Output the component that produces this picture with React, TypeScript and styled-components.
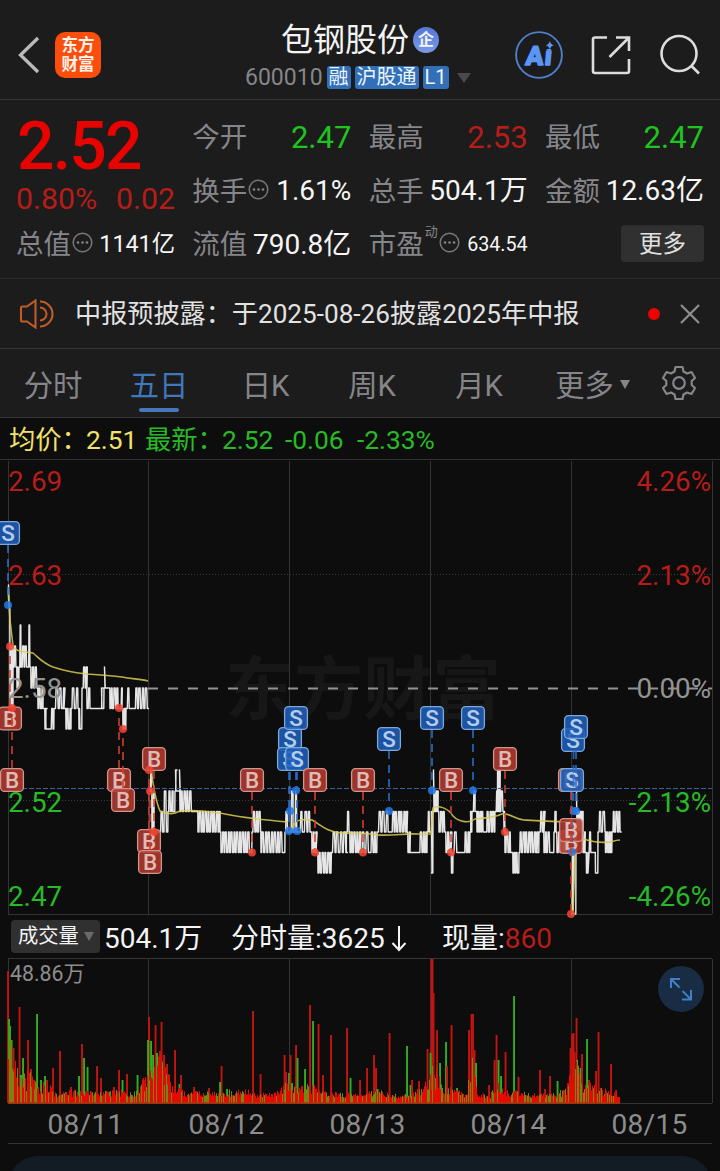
import React from "react";
import styled, { createGlobalStyle } from "styled-components";

const RED = "#e60300";
const DIM_RED = "#b71c18";
const GREEN = "#1fc41f";
const SOFT_GREEN = "#26bb26";
const MUTED = "#86868a";

const Global = createGlobalStyle`
  * { box-sizing: border-box; }
  body { margin: 0; background: #0d0d0d; }
`;

const Screen = styled.div`
  width: 720px;
  height: 1171px;
  overflow: hidden;
  display: flex;
  flex-direction: column;
  background: #0d0d0d;
  color: #f4f4f4;
  font-family: Roboto, "Noto Sans CJK SC", sans-serif;
  font-size: 28px;
  line-height: 1;
  white-space: nowrap;
`;

const Header = styled.header`
  flex: none;
  height: 100px;
  display: grid;
  grid-template-columns: 220px 1fr 220px;
  background: #1c1c1c;
  border-bottom: 1px solid #343434;
`;

const HeaderLeft = styled.div`
  display: flex;
  align-items: center;
  padding: 11px 0 0 17px;
  gap: 15px;
`;

const Logo = styled.div`
  width: 46px;
  height: 46px;
  border-radius: 10px;
  background: #fb4d0c;
  color: #fff3ea;
  display: flex;
  flex-direction: column;
  align-items: center;
  justify-content: center;
  font: 700 16.5px/19px "Noto Sans CJK SC", sans-serif;
  padding-bottom: 2px;
`;

const HeaderCenter = styled.div`
  display: flex;
  flex-direction: column;
  padding-top: 22px;
`;

const TitleRow = styled.div`
  display: flex;
  align-items: center;
  height: 35px;
  padding-left: 61px;
  font-size: 32px;
  gap: 4px;
`;

const CompanyBadge = styled.span`
  width: 26px;
  height: 26px;
  border-radius: 50%;
  background: linear-gradient(#5376d6, #7b9ae8);
  display: flex;
  align-items: center;
  justify-content: center;
  font-size: 16px;
  font-weight: 700;
`;

const CodeRow = styled.div`
  display: flex;
  align-items: center;
  height: 41px;
  padding-left: 25px;
  gap: 4px;
  color: ${MUTED};
  font-size: 23px;
`;

const Tag = styled.span`
  height: 23px;
  padding: 0 2px;
  border-radius: 3px;
  background: #3170b8;
  color: #eef4fb;
  font-size: 20px;
  line-height: 22px;
`;

const Caret = styled.span<{ $w: number; $h: number; $color: string; $ml?: number; $up?: number }>`
  width: 0;
  height: 0;
  margin-left: ${(p) => p.$ml ?? 0}px;
  margin-bottom: ${(p) => p.$up ?? 0}px;
  border-left: ${(p) => p.$w / 2}px solid transparent;
  border-right: ${(p) => p.$w / 2}px solid transparent;
  border-top: ${(p) => p.$h}px solid ${(p) => p.$color};
`;

const HeaderRight = styled.div`
  display: flex;
  align-items: center;
  padding: 10px 0 0 15px;
  gap: 28px;
`;

const Quote = styled.section`
  flex: none;
  height: 179px;
  padding: 11px 16px 0;
  display: grid;
  grid-template-columns: repeat(4, 159px);
  grid-template-rows: repeat(3, 53.5px);
  justify-content: space-between;
  background: #1c1c1c;
  border-bottom: 1px solid #2a2a2a;
`;

const PriceBlock = styled.div`
  grid-row: span 2;
  display: flex;
  flex-direction: column;
`;

const Price = styled.div`
  color: ${RED};
  font-size: 66px;
  font-weight: 500;
  line-height: 71px;
  letter-spacing: -1.8px;
  padding-left: 1px;
`;

const Change = styled.div`
  display: flex;
  justify-content: space-between;
  color: ${DIM_RED};
  font-size: 30.3px;
  line-height: 34px;
`;

const Cell = styled.div`
  display: flex;
  align-items: center;
  justify-content: space-between;
`;

const Label = styled.span`
  display: flex;
  align-items: center;
  gap: 1px;
  color: ${MUTED};
  font-size: 27.5px;
`;

const Sup = styled.sup`
  align-self: flex-start;
  font-size: 13px;
  line-height: 13px;
  margin: -6px 0 0 0;
`;

const Value = styled.span<{ $color?: string; $size?: number }>`
  color: ${(p) => p.$color ?? "#f6f6f6"};
  font-size: ${(p) => p.$size ?? 28}px;
`;

const MoreButton = styled.button`
  justify-self: end;
  align-self: center;
  width: 83px;
  height: 37px;
  margin-top: -2px;
  border: 0;
  border-radius: 4px;
  background: #303030;
  color: #e0e0e0;
  font: 23.5px/34px Roboto, "Noto Sans CJK SC", sans-serif;
  padding: 0;
`;

const Notice = styled.section`
  flex: none;
  height: 70px;
  display: flex;
  align-items: center;
  padding: 0 20px 0 19px;
  background: #1c1c1c;
  border-bottom: 1px solid #343434;
  color: #e2e2e2;
  font-size: 26.15px;
`;

const NoticeText = styled.span`
  flex: 1;
  margin-left: 20px;
  padding-top: 2px;
`;

const RedDot = styled.span`
  width: 12px;
  height: 12px;
  border-radius: 50%;
  background: #ee0200;
  margin-right: 20px;
`;

const Tabs = styled.nav`
  flex: none;
  height: 69px;
  display: grid;
  grid-template-columns: 106px 106px 107px 106px 108px 119px 1fr;
  background: #1c1c1c;
  border-bottom: 1px solid #343434;
`;

const Tab = styled.div<{ $active?: boolean }>`
  position: relative;
  display: flex;
  align-items: center;
  justify-content: center;
  gap: 6px;
  padding-top: 7px;
  color: ${(p) => (p.$active ? "#3f78bc" : MUTED)};
  font-size: 29.3px;
  &::after {
    content: "";
    display: ${(p) => (p.$active ? "block" : "none")};
    position: absolute;
    bottom: 5px;
    left: 33px;
    width: 40px;
    height: 4px;
    border-radius: 2px;
    background: #4478b8;
  }
`;

const SettingsTab = styled(Tab)`
  justify-content: flex-start;
  padding: 0 0 0 9px;
`;

const Averages = styled.div`
  flex: none;
  height: 41px;
  display: flex;
  align-items: center;
  padding: 3px 0 0 9px;
  font-size: 26.3px;
  color: ${SOFT_GREEN};
`;

const Avg = styled.span<{ $w: number; $color?: string }>`
  width: ${(p) => p.$w}px;
  color: ${(p) => p.$color ?? "inherit"};
`;

const Chart = styled.svg`
  flex: none;
  display: block;
  font-family: Roboto, "Noto Sans CJK SC", sans-serif;
`;

const VolumeHead = styled.div`
  flex: none;
  height: 39px;
  display: flex;
  align-items: center;
  padding-left: 11px;
  font-size: 28px;
`;

const Select = styled.div`
  width: 89px;
  height: 33px;
  margin: -4px 4px 0 0;
  border-radius: 4px;
  background: #303030;
  display: flex;
  align-items: center;
  padding: 0 0 0 7px;
  gap: 5px;
  font-size: 20.3px;
`;

const HeadItem = styled.span<{ $w: number }>`
  display: flex;
  width: ${(p) => p.$w}px;
`;

const Dates = styled.div`
  flex: none;
  height: 40px;
  margin: 0 8px;
  width: 704px;
  display: grid;
  grid-template-columns: repeat(5, 141px);
  align-items: center;
  text-align: center;
  border-bottom: 1px solid #343434;
  color: #8d8d8d;
  font-size: 28px;
  letter-spacing: 0.3px;
  padding: 3px 0 0 7px;
`;

const BottomPanel = styled.div`
  flex: none;
  height: 60px;
  margin: 12px 8px 0;
  border-radius: 32px;
  background: #131b24;
`;

const DotsIcon = styled.svg`
  margin-top: -4px;
`;

const Dots = () => (
  <DotsIcon width="21" height="21" viewBox="0 0 21 21" fill="none" stroke="#77777a">
    <circle cx="10.5" cy="10.5" r="9.3" strokeWidth="1.5" />
    <g fill="#86868a" stroke="none">
      <circle cx="6" cy="10.5" r="1.3" />
      <circle cx="10.5" cy="10.5" r="1.3" />
      <circle cx="15" cy="10.5" r="1.3" />
    </g>
  </DotsIcon>
);

const AiIcon = () => (
  <svg width="48" height="48" viewBox="0 0 48 48">
    <circle cx="24" cy="24" r="22.9" fill="none" stroke="#4f7fcb" strokeWidth="1.9" />
    <text transform="translate(10 33.5) skewX(-5)" fontFamily="Roboto, sans-serif" fontWeight="900" fontSize="26.5" fill="#5b95f5" stroke="#5b95f5" strokeWidth="1.3" strokeLinejoin="round">A<tspan dx="1">i</tspan></text>
    <rect x="28.5" y="9" width="12" height="9" fill="#1c1c1c" />
    <path d="M34.8 10 Q35.6 13.400 39 14.200 Q35.6 15 34.8 18.400 Q34 15 30.600 14.200 Q34 13.400 34.8 10Z" fill="#5b95f5" />
  </svg>
);

const grid = "#343434";

/* Left x, right x, upper price level, lower price level, tooth pitch. */
type Band = [number, number, number, number, number?];

const bands: Band[][] = [
  [
    [8, 9, 585, 605], [10, 13, 646, 706, 1.5], [13, 17, 646, 667], [17, 18, 667, 688], [19, 21, 625, 667, 2],
    [21, 27, 646, 667], [28, 30, 625, 667, 2], [31, 37, 667, 688], [38, 43, 688, 708.5], [45, 46, 708.5, 729],
    [50, 53, 708.5, 729], [54, 64, 688, 708.5, 3.4], [66, 71, 708.5, 729], [71, 78, 688, 708.5, 3.4], [79, 80, 708.5, 729],
    [82, 87, 667, 688], [87, 90, 688, 708.5], [101, 102, 688, 708.5], [104, 105, 667, 688], [110, 119, 688, 708.5],
    [120, 122, 688, 708.5], [123, 125.5, 708.5, 729], [126, 130, 688, 708.5, 3.4], [134, 148, 688, 708.5, 3],
  ],
  [
    [149.5, 151, 755, 791], [152, 154, 791, 832], [159.5, 163, 811.5, 832], [163, 167, 791, 832, 3], [168, 173, 791, 811.5],
    [175, 176, 770, 791], [179, 180, 770, 791], [180, 192, 791, 811.5], [198, 220, 811.5, 832], [221, 250, 832, 852.5],
    [252, 261, 811.5, 832], [261, 283, 832, 852.5, 2.8], [285, 289, 811.5, 832],
  ],
  [
    [290, 293, 791, 832, 3], [294, 298, 791, 832, 3], [299, 303, 811.5, 832, 3], [303, 312, 811.5, 832, 3.2], [312, 316, 832, 852.5],
    [318, 331, 852.5, 873], [331, 346, 832, 852.5, 3.4], [346.5, 349, 811.5, 832], [350, 360, 832, 852.5], [361, 369, 832, 852.5, 3.4],
    [370, 376, 832, 852.5], [377, 389, 811.5, 832, 3.4], [391, 407, 811.5, 832], [408, 410, 832, 852.5], [419, 427, 832, 852.5],
    [427, 430, 811.5, 832],
  ],
  [
    [431, 432, 811.5, 873], [433, 434, 770, 811.5], [434, 438, 791, 811.5, 1.4], [439, 445, 811.5, 832], [446, 451, 832, 852.5, 3],
    [451.5, 452.5, 852.5, 873], [453, 458, 832, 852.5, 3.6], [464, 469, 832, 852.5], [470, 471, 811.5, 832], [472, 475, 791, 811.5, 3],
    [477, 484, 811.5, 832, 1.9], [486, 494, 811.5, 832], [495, 497, 791, 811.5], [497, 500, 770, 811.5, 1.6], [500, 503, 791, 811.5],
    [504, 505, 811.5, 832], [505, 511, 832, 852.5], [513, 518, 852.5, 873, 2], [519, 537, 832, 852.5], [539, 544, 811.5, 832, 3],
    [544, 550, 832, 852.5], [554, 556, 811.5, 832], [557, 570, 832, 852.5],
  ],
  [
    [571, 573, 852.5, 914], [576, 577, 791, 832], [577, 583, 811.5, 832, 2], [583, 585, 832, 852.5], [586.5, 588, 852.5, 873],
    [588, 591, 832, 852.5, 3], [595.5, 597, 852.5, 873], [598, 606, 811.5, 832, 3.2], [605.5, 611, 832, 852.5, 2], [612, 621, 811.5, 832],
  ],
];

/* Prices tick between two levels, so every move is nearly vertical. */
const linePath = (list: Band[]) => {
  const pts: string[] = [];
  let n = 0;
  let last: number | null = null;
  list.forEach(([x0, x1, hi, lo, pitch = 2.6]) => {
    if (last !== null) pts.push(`${x0 - 0.2} ${last}`);
    let top = false;
    let x = x0;
    while (x <= x1 + 0.01) {
      const step = (pitch / 2) * (0.7 + 0.6 * Math.abs(Math.sin(++n * 2.3)));
      const y = top ? hi : lo;
      pts.push(`${x.toFixed(1)} ${y}`, `${(x + step * 0.7).toFixed(1)} ${y}`);
      top = !top;
      x += step;
    }
    if (x1 - x0 < 1.5) pts.push(`${x0 + 0.5} ${hi}`);
    pts.push(`${x1} ${lo}`);
    last = lo;
  });
  return "M" + pts.join("L");
};

const averageLines = [
  "M8 590L10 620L13 646C16 653 25 651 33 653C39 658 43 663 53 667C65 671 75 673 87 674C105 675 115 676 122 677C132 679 140 679 148 681",
  "M150 762C152 778 155 800 160 811C170 815 174 814 180 811C200 809 212 812 225 814C245 818 265 820 288 822",
  "M289.5 833C295 818 301 819 312 820C320 824 326 832 342 833C360 834 372 833 378 835C395 836 405 833 418 834L430 834",
  "M431 835L433 808C439 805 448 808 453 816C460 823 470 823 475 819C488 818 495 817 502 814C510 813 514 819 524 820C540 821 555 822 571 822",
  "M573 914L575 853C577 838 581 838 587 840C593 842 600 843 611 842C614 841 616 840 620 840",
];

type Mark = { x: number; y: number; k: "B" | "S" };
const marks: Mark[] = [
  { x: 8, y: 533, k: "S" }, { x: 10, y: 718.5, k: "B" }, { x: 12, y: 780, k: "B" }, { x: 119, y: 780, k: "B" }, { x: 123, y: 800, k: "B" },
  { x: 154, y: 759, k: "B" }, { x: 149, y: 841, k: "B" }, { x: 150, y: 862, k: "B" }, { x: 252, y: 780, k: "B" },
  { x: 290, y: 739, k: "S" }, { x: 289, y: 759, k: "S" }, { x: 296, y: 718, k: "S" }, { x: 297, y: 759, k: "S" },
  { x: 315, y: 780, k: "B" }, { x: 363, y: 780, k: "B" }, { x: 389, y: 739, k: "S" }, { x: 432, y: 718, k: "S" },
  { x: 451, y: 780, k: "B" }, { x: 473, y: 718, k: "S" }, { x: 505, y: 759, k: "B" }, { x: 573, y: 740, k: "S" },
  { x: 576, y: 727, k: "S" }, { x: 570, y: 780, k: "B" }, { x: 572, y: 780, k: "S" }, { x: 571, y: 842, k: "B" }, { x: 571, y: 830, k: "B" },
];

/* x, start y, end y (where the trade dot sits) */
const trades: [number, number, number, "B" | "S"][] = [
  [8, 545, 605, "S"], [290, 772, 811, "S"], [296, 772, 790.5, "S"], [289, 772, 831, "S"], [297, 772, 831, "S"], [389, 751, 811, "S"],
  [432, 730, 790.5, "S"], [473, 730, 790.5, "S"], [576, 751, 811, "S"], [573.5, 751, 811, "S"], [572, 792, 852, "S"],
  [10, 706, 646.5, "B"], [12, 768, 708, "B"], [119, 768, 708, "B"], [123, 788, 729, "B"], [149, 829, 770, "B"], [150, 850, 791, "B"],
  [154, 771, 832, "B"], [252, 792, 852.5, "B"], [315, 792, 852.5, "B"], [363, 792, 852.5, "B"], [451, 792, 852.5, "B"],
  [505, 771, 832, "B"], [571, 792, 914, "B"],
];

const axis: [number, string, string, string][] = [
  [491, "2.69", "4.26%", DIM_RED], [585, "2.63", "2.13%", DIM_RED], [698, "2.58", "0.00%", "#939393"],
  [811.5, "2.52", "-2.13%", SOFT_GREEN], [905.5, "2.47", "-4.26%", SOFT_GREEN],
];

const Marker = ({ x, y, k }: Mark) => (
  <g>
    <rect x={x - 11.4} y={y - 11.4} width="22.8" height="22.8" rx="4" fill={k === "B" ? "#b33a2e" : "#1f5fb8"} fillOpacity="0.88" stroke={k === "B" ? "#d0958e" : "#7ca9dc"} strokeWidth="1.3" />
    <text x={x} y={y + 8} textAnchor="middle" fontSize="22.5" fontWeight="500" fill={k === "B" ? "#dfbab6" : "#b4cdec"}>{k}</text>
  </g>
);

const PriceChart = () => (
  <Chart width="720" height="460" viewBox="0 459 720 460">
    <text x="225" y="714" fontSize="69" fontWeight="700" fill="#171717">东方财富</text>
    <g stroke={grid} strokeWidth="1" fill="none" shapeRendering="crispEdges">
      <path d="M0 459.5H720M8 914.5H712" />
      {[8.5, 148.5, 289.5, 430.5, 571.5, 712.5].map((x) => <path key={x} d={`M${x} 461V914`} />)}
      <path d="M8 574.5H712M8 800.5H712" strokeDasharray="1 2" stroke="#3c3c3c" />
    </g>
    <path d="M148 688.5H712" stroke="#929292" strokeWidth="1.8" strokeDasharray="10 10" />
    {bands.map((b, i) => <path key={i} d={linePath(b)} fill="none" stroke="#e6e6e6" strokeWidth="1.45" strokeLinejoin="round" />)}
    {averageLines.map((d) => <path key={d} d={d} fill="none" stroke="#d8cd54" strokeWidth="1.6" opacity="0.85" />)}
    <path d="M8 788.5H712" stroke="#3a619b" strokeWidth="1.2" strokeDasharray="5 2" />
    {axis.map(([y, l, r, c]) => (
      <g key={l} fontSize="27.8" fill={c}>
        <text x="8" y={y}>{l}</text>
        <text x="711" y={y} textAnchor="end">{r}</text>
      </g>
    ))}
    {marks.map((m, i) => <Marker key={i} {...m} />)}
    {trades.map(([x, a, b, k], i) => (
      <g key={i} opacity="0.86">
        <path d={`M${x} ${a}V${b}`} stroke={k === "B" ? "#d6402f" : "#2b70cc"} strokeWidth="1.8" strokeDasharray="8 6" />
        <circle cx={x} cy={b} r="4" fill={k === "B" ? "#f04433" : "#237ae6"} />
      </g>
    ))}
  </Chart>
);

/* Tall volume bars: x, top y, colour */
const spikes: [number, number, "r" | "g"][] = [
  [8, 971, "r"], [9, 1019, "g"], [10, 1026, "g"], [11.5, 1040, "g"], [13.5, 1048, "r"], [15, 1077, "g"], [17, 1082, "g"], [19.5, 1007, "r"],
  [21, 1075, "g"], [23, 1058, "g"], [25, 1078, "r"], [28, 1040, "r"], [31, 1069, "r"], [34, 1080, "r"], [37, 1014, "g"], [41, 1080, "g"], [45, 1076, "g"], [47, 1080, "r"],
  [53, 1068, "r"], [60, 1051, "r"], [66, 1092, "g"], [71, 1087, "r"], [79, 1076, "g"], [82, 1044, "r"], [84, 1058, "g"], [87.5, 1067, "g"],
  [97, 1066, "r"], [101, 1078, "r"], [110, 1092, "g"], [114, 1087, "r"], [119, 1070, "r"], [122.5, 1080, "g"], [127, 1074, "r"], [137.5, 1075, "g"],
  [142, 1090, "g"], [145, 1080, "r"], [149, 1017, "r"], [148, 1040, "g"], [151, 1041, "g"], [153, 1055, "g"], [155.5, 1025, "r"], [157, 1053, "g"],
  [160, 1051, "r"], [161.5, 1022, "r"], [164, 1055, "r"], [167, 1064, "r"], [170, 1088, "r"], [175, 1050, "r"], [179.5, 1084, "g"], [181, 1075, "r"],
  [194, 1087, "r"], [209, 1088, "r"], [221.5, 1066, "r"], [220, 1082, "g"], [227, 1089, "g"], [253, 1011, "r"], [260.5, 1074, "r"],
  [284.5, 1055, "r"], [286, 1072, "r"], [289, 1073, "g"], [290.5, 1055, "r"], [292, 1083, "g"], [296, 1045, "r"], [297.5, 1058, "g"],
  [305, 1069, "g"], [310, 1005, "r"], [313, 1021, "g"], [318.5, 1024, "r"], [323, 1075, "r"], [331, 1035, "r"], [347, 1028, "r"], [350.5, 1078, "g"],
  [360, 1080, "r"], [367, 1068, "r"], [374, 1055, "r"], [376, 1068, "r"], [377.5, 1089, "g"], [389.5, 1033, "r"], [407, 1046, "g"], [410.5, 1085, "g"],
  [412, 1080, "r"], [419, 1081, "r"], [427.5, 1049, "r"], [431.5, 959, "r"], [432.5, 959, "r"], [433.5, 993, "r"], [430.5, 1053, "g"],
  [437, 1030, "r"], [436, 1078, "g"], [440, 1063, "g"], [446, 1042, "g"], [447, 1066, "r"], [451.5, 1025, "r"], [457, 1088, "g"],
  [469, 1030, "r"], [471.5, 1014, "r"], [473, 1014, "r"], [474.5, 1050, "r"], [476, 1063, "g"], [489, 1085, "r"], [492, 1092, "g"],
  [494.5, 1060, "r"], [496.5, 1035, "r"], [498.5, 1060, "g"], [501, 1076, "g"], [505.5, 1052, "r"], [514, 996, "g"], [518.5, 1077, "r"],
  [540, 1070, "r"], [545, 1089, "r"], [550, 1076, "r"], [557.5, 1081, "g"], [568, 1083, "r"], [570.5, 1048, "r"], [572, 1034, "r"],
  [573.5, 1033, "r"], [574.5, 1052, "r"], [576.5, 1018, "r"], [577, 1060, "g"], [580.5, 1068, "g"], [582, 1054, "r"],
  [587, 1039, "g"], [589, 1080, "r"], [596, 1071, "r"], [598.5, 1032, "r"], [599.5, 1091, "g"], [611, 1064, "r"], [605, 1094, "g"], [616, 1090, "r"], [618.5, 1097, "g"],
];

/* Height of the low, dense volume along the session: x, height */
const envelope: [number, number][] = [
  [8, 60], [14, 45], [20, 20], [28, 26], [38, 14], [45, 20], [55, 8], [80, 9], [95, 7], [120, 9], [138, 8], [146, 28], [155, 42],
  [163, 36], [172, 15], [186, 7], [200, 8], [222, 8], [245, 11], [256, 5], [272, 8], [284, 16], [294, 14], [304, 13], [312, 16], [330, 7],
  [360, 6], [380, 9], [400, 4], [415, 8], [424, 14], [433, 32], [441, 16], [452, 12], [465, 5], [473, 45], [478, 6], [490, 5], [497, 16],
  [505, 8], [518, 10], [530, 6], [555, 6], [567, 12], [573, 50], [582, 18], [590, 16], [605, 10], [620, 4],
];

const envelopeAt = (x: number) => {
  for (let i = 1; i < envelope.length; i++) {
    const [x0, h0] = envelope[i - 1];
    const [x1, h1] = envelope[i];
    if (x <= x1) return h0 + ((h1 - h0) * (x - x0)) / (x1 - x0);
  }
  return 3;
};

const dense = (() => {
  const out: { x: number; h: number; c: string }[] = [];
  let s = 41;
  const rnd = () => (s = (s * 16807) % 2147483647) / 2147483647;
  for (let x = 8; x < 620; x += 1) {
    const green = rnd() > 0.66;
    out.push({ x, h: 3 + envelopeAt(x) * (0.35 + rnd() * 0.85), c: green ? "#74860f" : "#e60a04" });
  }
  return out;
})();

const VolumeChart = () => (
  <Chart width="720" height="146" viewBox="0 958 720 146">
    <g stroke={grid} fill="none" shapeRendering="crispEdges">
      <path d="M8 958.5H712M8 1103.5H712" />
      {[8.5, 148.5, 289.5, 430.5, 571.5, 712.5].map((x) => <path key={x} d={`M${x} 959V1103`} />)}
    </g>
    {spikes.map(([x, y, c], i) => (
      <rect key={i} x={x - 0.9} y={y} width="1.9" height={1103 - y} fill={c === "r" ? "#c41410" : "#2fae20"} />
    ))}
    {dense.map((d, i) => <rect key={i} x={d.x} y={1103 - d.h} width="1" height={d.h} fill={d.c} />)}
    <path d="M8 1103H620" stroke="#b3350b" strokeWidth="1.5" />
    <text x="10" y="981" fontSize="21.3" fill="#8d8d8d">48.86万</text>
    <circle cx="681" cy="989" r="23" fill="#182c44" />
    <path d="M679.5 987.5L671 979M671 988V979H680M682.5 991L691 999.5M691 990V999.5H682" fill="none" stroke="#3f7fc6" strokeWidth="2" />
  </Chart>
);

const DownArrow = styled.svg`
  margin-left: 6px;
  margin-top: -1px;
`;

export default function App() {
  return (
    <>
      <Global />
      <Screen>
        <Header>
          <HeaderLeft>
            <svg width="23" height="38" viewBox="0 0 23 38" fill="none" stroke="#bababa" strokeWidth="3.3">
              <path d="M21 2L3.5 19L21 36" />
            </svg>
            <Logo><span>东方</span><span>财富</span></Logo>
          </HeaderLeft>
          <HeaderCenter>
            <TitleRow>包钢股份<CompanyBadge>企</CompanyBadge></TitleRow>
            <CodeRow>
              600010<Tag>融</Tag><Tag>沪股通</Tag><Tag>L1</Tag>
              <Caret $w={15} $h={10} $color="#4a4a4a" $ml={4} />
            </CodeRow>
          </HeaderCenter>
          <HeaderRight>
            <AiIcon />
            <svg width="40" height="40" viewBox="0 0 40 40" fill="none" stroke="#dcdcdc" strokeWidth="2.6">
              <path d="M16 2.5H4Q2 2.5 2 4.5V36Q2 38 4 38H36Q38 38 38 36V24M25 2.5H38V16M38 2.5L18.5 22" />
            </svg>
            <svg width="42" height="42" viewBox="0 0 42 42" fill="none" stroke="#dcdcdc" strokeWidth="2.6">
              <circle cx="20" cy="19.5" r="17.5" /><path d="M32.5 32L40 39.5" />
            </svg>
          </HeaderRight>
        </Header>

        <Quote>
          <PriceBlock>
            <Price>2.52</Price>
            <Change><span>0.80%</span><span>0.02</span></Change>
          </PriceBlock>
          <Cell><Label>今开</Label><Value $color={GREEN} $size={31}>2.47</Value></Cell>
          <Cell><Label>最高</Label><Value $color={DIM_RED} $size={31}>2.53</Value></Cell>
          <Cell><Label>最低</Label><Value $color={GREEN} $size={31}>2.47</Value></Cell>
          <Cell><Label>换手<Dots /></Label><Value>1.61%</Value></Cell>
          <Cell><Label>总手</Label><Value>504.1万</Value></Cell>
          <Cell><Label>金额</Label><Value>12.63亿</Value></Cell>
          <Cell><Label>总值<Dots /></Label><Value $size={23.3}>1141亿</Value></Cell>
          <Cell><Label>流值</Label><Value>790.8亿</Value></Cell>
          <Cell><Label>市盈<Sup>动</Sup><Dots /></Label><Value $size={19.7}>634.54</Value></Cell>
          <MoreButton>更多</MoreButton>
        </Quote>

        <Notice>
          <svg width="36" height="30" viewBox="0 0 36 30" fill="none" stroke="#bd5c26" strokeWidth="2.1">
            <path d="M2 9Q2 7.5 3.5 7.5H8L16.5 1.5V28.5L8 22.5H3.5Q2 22.5 2 21ZM21 8.5A6.5 6.5 0 0 1 21 21.5M21 2.5A12.5 12.5 0 0 1 21 27.5" />
          </svg>
          <NoticeText>中报预披露：于2025-08-26披露2025年中报</NoticeText>
          <RedDot />
          <svg width="20" height="20" viewBox="0 0 20 20" stroke="#8f8f8f" strokeWidth="2.2">
            <path d="M1 1L19 19M19 1L1 19" />
          </svg>
        </Notice>

        <Tabs>
          <Tab>分时</Tab>
          <Tab $active>五日</Tab>
          <Tab>日K</Tab>
          <Tab>周K</Tab>
          <Tab>月K</Tab>
          <Tab>更多<Caret $w={10} $h={9} $color={MUTED} $up={5} /></Tab>
          <SettingsTab>
            <svg width="36" height="36" viewBox="0 0 36 36" fill="none" stroke="#86868a" strokeWidth="2.2" strokeLinejoin="round">
              <path d="M14.5 2H21.5L22.5 6.5L26 8.5L30.5 7L34 13L30.7 16V20L34 23L30.5 29L26 27.5L22.5 29.5L21.5 34H14.5L13.5 29.5L10 27.5L5.5 29L2 23L5.3 20V16L2 13L5.5 7L10 8.5L13.5 6.5Z" />
              <circle cx="18" cy="18" r="5.8" />
            </svg>
          </SettingsTab>
        </Tabs>

        <Averages>
          <Avg $w={77} $color="#f1e16b">均价：</Avg>
          <Avg $w={59} $color="#f1e16b">2.51</Avg>
          <Avg $w={77}>最新：</Avg>
          <Avg $w={63}>2.52</Avg>
          <Avg $w={72}>-0.06</Avg>
          <Avg $w={80}>-2.33%</Avg>
        </Averages>

        <PriceChart />

        <VolumeHead>
          <Select>成交量<Caret $w={10} $h={9} $color="#6a6a6a" /></Select>
          <HeadItem $w={127}>504.1万</HeadItem>
          <HeadItem $w={211}>
            分时量:3625
            <DownArrow width="16" height="28" viewBox="0 0 16 28" fill="none" stroke="#f4f4f4" strokeWidth="2">
              <path d="M8 2V26M1.5 19L8 26L14.5 19" />
            </DownArrow>
          </HeadItem>
          <HeadItem $w={120}>现量:<Value $color={DIM_RED}>860</Value></HeadItem>
        </VolumeHead>

        <VolumeChart />

        <Dates>
          {["08/11", "08/12", "08/13", "08/14", "08/15"].map((d) => <span key={d}>{d}</span>)}
        </Dates>
        <BottomPanel />
      </Screen>
    </>
  );
}
